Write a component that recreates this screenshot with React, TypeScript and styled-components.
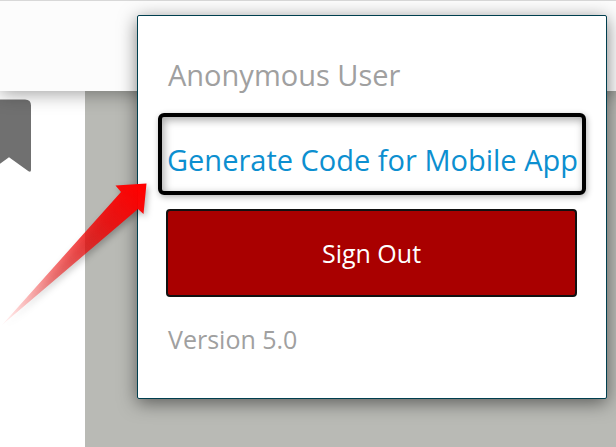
import styled, { createGlobalStyle } from "styled-components";

const GlobalStyle = createGlobalStyle`
  * { box-sizing: border-box; }
  html, body, #root { height: 100%; }
  body {
    margin: 0;
    overflow: hidden;
    background: #ffffff;
    font-family: "Open Sans", "Noto Sans", sans-serif;
  }
`;

const Page = styled.div`
  position: relative;
  display: flex;
  flex-direction: column;
  min-height: 100%;
`;

const Header = styled.header`
  position: relative;
  z-index: 1;
  flex: 0 0 91px;
  border-top: 1px solid #d8d8d8;
  background: #fcfcfc;
  box-shadow: 0 2px 18px rgba(0, 0, 0, 0.4);
`;

const Body = styled.div`
  display: flex;
  flex: 1;
`;

const Sidebar = styled.aside`
  flex: 0 0 85px;
  padding-top: 8px;
  background: #ffffff;
`;

const Bookmark = styled.svg`
  display: block;
  width: 31px;
  height: 74px;
`;

const Canvas = styled.main`
  flex: 1;
  background: #b9bab5;
`;

const Menu = styled.section`
  position: absolute;
  z-index: 2;
  top: 15px;
  left: 137px;
  right: 9px;
  display: flex;
  flex-direction: column;
  padding: 40px 20px;
  border: 1px solid #003f4f;
  border-radius: 2px;
  background: #ffffff;
  box-shadow: 0 4px 18px rgba(0, 0, 0, 0.5);
`;

const Caption = styled.p<{ $size: number }>`
  margin: 0 10px;
  color: #a0a0a0;
  font-size: ${({ $size }) => $size}px;
  font-weight: 400;
  line-height: 38px;
`;

const CodeLink = styled.a`
  display: block;
  margin: 19px 0 14px;
  padding: 24px 0 12px 5px;
  border: 4px solid #000000;
  border-radius: 6px;
  color: #0c8fd0;
  font-size: 29px;
  font-weight: 400;
  line-height: 38px;
  white-space: nowrap;
  text-decoration: none;
  box-shadow: 1px 2px 6px rgba(0, 0, 0, 0.3), inset 2px 3px 8px rgba(0, 0, 0, 0.35);
`;

const SignOut = styled.button`
  height: 88px;
  margin: 0 9px 23px 8px;
  padding: 0;
  border: 2px solid #111111;
  border-radius: 4px;
  background: #a90000;
  color: #ffffff;
  font: 400 25px "Open Sans", "Noto Sans", sans-serif;
  cursor: pointer;
`;

const Pointer = styled.svg`
  position: absolute;
  z-index: 3;
  top: 174px;
  left: 0;
  width: 160px;
  height: 160px;
  pointer-events: none;
  filter: drop-shadow(2px 3px 3px rgba(0, 0, 0, 0.3));
`;

export default function App() {
  return (
    <>
      <GlobalStyle />
      <Page>
        <Header />
        <Body>
          <Sidebar>
            <Bookmark viewBox="0 0 31 74" aria-hidden="true">
              <path
                d="M0 0.500H25Q31 0.500 31 6.500V71Q31 73.500 28.500 72.300L9 58.300L0 64.700Z"
                fill="#707070"
              />
            </Bookmark>
          </Sidebar>
          <Canvas />
        </Body>
        <Menu aria-label="Account">
          <Caption $size={29}>Anonymous User</Caption>
          <CodeLink href="#code">Generate Code for Mobile App</CodeLink>
          <SignOut type="button">Sign Out</SignOut>
          <Caption $size={25}>Version 5.0</Caption>
        </Menu>
        <Pointer viewBox="0 0 160 160" aria-hidden="true">
          <defs>
            <linearGradient id="arrowFade" gradientUnits="userSpaceOnUse" x1="6" y1="151" x2="142" y2="14">
              <stop offset="0" stopColor="#ff0000" stopOpacity="0.05" />
              <stop offset="0.35" stopColor="#f00000" stopOpacity="0.5" />
              <stop offset="0.75" stopColor="#f00808" stopOpacity="0.9" />
              <stop offset="1" stopColor="#ff0000" />
            </linearGradient>
          </defs>
          <path d="M2 151L121 18L115.500 11.500L146.500 9.500L143.500 40L138 35Z" fill="url(#arrowFade)" />
        </Pointer>
      </Page>
    </>
  );
}
